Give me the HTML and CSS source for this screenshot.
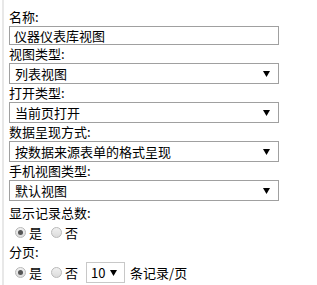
FILE: index.html
```html
<!DOCTYPE html>
<html lang="zh">
<head>
<meta charset="utf-8">
<title>视图设置</title>
<link rel="stylesheet" href="styles.css">
</head>
<body>
<div class="panel">
  <div class="label">名称:</div>
  <div class="field"><input class="text" type="text" value="仪器仪表库视图"></div>

  <div class="label">视图类型:</div>
  <div class="field sel">
    <span class="sel-text">列表视图</span>
    <svg class="arrow" width="7" height="6" viewBox="0 0 7 6"><path d="M0 0H7L3.5 6Z" fill="#000"/></svg>
  </div>

  <div class="label">打开类型:</div>
  <div class="field sel">
    <span class="sel-text">当前页打开</span>
    <svg class="arrow" width="7" height="6" viewBox="0 0 7 6"><path d="M0 0H7L3.5 6Z" fill="#000"/></svg>
  </div>

  <div class="label">数据呈现方式:</div>
  <div class="field sel">
    <span class="sel-text">按数据来源表单的格式呈现</span>
    <svg class="arrow" width="7" height="6" viewBox="0 0 7 6"><path d="M0 0H7L3.5 6Z" fill="#000"/></svg>
  </div>

  <div class="label">手机视图类型:</div>
  <div class="field sel">
    <span class="sel-text">默认视图</span>
    <svg class="arrow" width="7" height="6" viewBox="0 0 7 6"><path d="M0 0H7L3.5 6Z" fill="#000"/></svg>
  </div>

  <div class="label label-gap">显示记录总数:</div>
  <div class="radios">
    <span class="radio checked"></span><span class="rlabel">是</span>
    <span class="radio"></span><span class="rlabel">否</span>
  </div>

  <div class="label">分页:</div>
  <div class="radios paging">
    <span class="radio checked"></span><span class="rlabel">是</span>
    <span class="radio"></span><span class="rlabel">否</span>
    <div class="small-sel">
      <span class="sel-text">10</span>
      <svg class="arrow" width="7" height="6" viewBox="0 0 7 6"><path d="M0 0H7L3.5 6Z" fill="#000"/></svg>
    </div>
    <span class="suffix">条记录/页</span>
  </div>
</div>
</body>
</html>
```

FILE: styles.css
```css
html, body {
  margin: 0;
  padding: 0;
  background: #fff;
}
body {
  font-family: "Noto Sans CJK SC", "Microsoft YaHei", sans-serif;
  font-size: 13px;
  color: #000;
}
.panel {
  margin-left: 2px;
  border-left: 2px solid #e8e8e8;
  min-height: 285px;
  box-sizing: border-box;
  padding: 8px 0 0 5px;
}
.label {
  height: 18px;
  line-height: 18px;
}
.label-gap {
  margin-top: 3px;
}
.field {
  width: 270px;
  box-sizing: border-box;
  border: 1px solid #a0a0a0;
  background: #fff;
}
.text {
  display: block;
  width: 100%;
  height: 17px;
  box-sizing: border-box;
  border: 0;
  margin: 0;
  padding: 0 4px;
  font: inherit;
  font-size: 13px;
  line-height: 17px;
  color: #000;
  outline: none;
}
.sel {
  height: 21px;
  display: flex;
  align-items: center;
  justify-content: space-between;
  padding: 0 8px 0 5px;
}
.sel-text {
  line-height: 19px;
}
.arrow {
  display: block;
  flex: none;
}
.radios {
  display: flex;
  align-items: center;
  height: 19px;
  margin-top: 1px;
  margin-bottom: 1px;
}
.radio {
  width: 9px;
  height: 9px;
  border-radius: 50%;
  border: 1px solid #b9b9b9;
  background: linear-gradient(#f0f0f0, #dcdcdc);
  position: relative;
  flex: none;
  margin-left: 6px;
  margin-right: 3px;
}
.radio.checked::after {
  content: "";
  position: absolute;
  left: 2px;
  top: 2px;
  width: 5px;
  height: 5px;
  border-radius: 50%;
  background: #555;
}
.rlabel {
  margin-right: 3px;
}
.paging {
  height: 21px;
}
.small-sel {
  width: 39px;
  height: 21px;
  box-sizing: border-box;
  border: 1px solid #c8c8c8;
  display: flex;
  align-items: center;
  padding: 0 7px 0 4px;
  justify-content: space-between;
  margin-left: 5px;
}
.suffix {
  margin-left: 5px;
}
```
